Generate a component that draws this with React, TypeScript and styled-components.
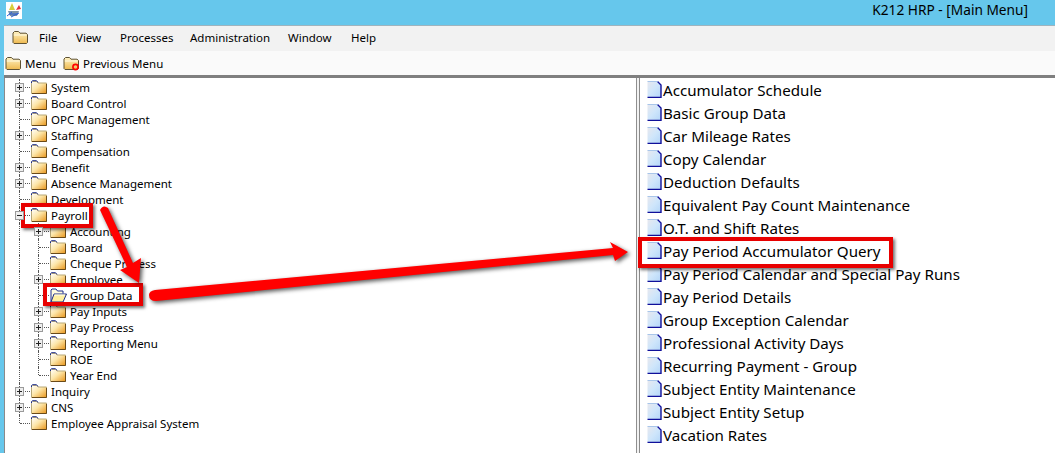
import styled, { createGlobalStyle } from "styled-components";

const GlobalStyle = createGlobalStyle`
  html, body {
    margin: 0;
    padding: 0;
    height: 100%;
    overflow: hidden;
    background: #66c7ec;
    font-family: "Noto Sans", "DejaVu Sans", sans-serif;
    color: #000;
  }
`;

interface TreeItem {
  label: string;
  level: 0 | 1;
  expander?: "plus" | "minus";
  open?: boolean;
  last?: boolean;
}

const treeItems: TreeItem[] = [
  { label: "System", level: 0, expander: "plus" },
  { label: "Board Control", level: 0, expander: "plus" },
  { label: "OPC Management", level: 0 },
  { label: "Staffing", level: 0, expander: "plus" },
  { label: "Compensation", level: 0 },
  { label: "Benefit", level: 0, expander: "plus" },
  { label: "Absence Management", level: 0, expander: "plus" },
  { label: "Development", level: 0 },
  { label: "Payroll", level: 0, expander: "minus" },
  { label: "Accounting", level: 1, expander: "plus" },
  { label: "Board", level: 1 },
  { label: "Cheque Process", level: 1 },
  { label: "Employee", level: 1, expander: "plus" },
  { label: "Group Data", level: 1, open: true },
  { label: "Pay Inputs", level: 1, expander: "plus" },
  { label: "Pay Process", level: 1, expander: "plus" },
  { label: "Reporting Menu", level: 1, expander: "plus" },
  { label: "ROE", level: 1 },
  { label: "Year End", level: 1, last: true },
  { label: "Inquiry", level: 0, expander: "plus" },
  { label: "CNS", level: 0, expander: "plus" },
  { label: "Employee Appraisal System", level: 0, last: true },
];

const listItems = [
  "Accumulator Schedule",
  "Basic Group Data",
  "Car Mileage Rates",
  "Copy Calendar",
  "Deduction Defaults",
  "Equivalent Pay Count Maintenance",
  "O.T. and Shift Rates",
  "Pay Period Accumulator Query",
  "Pay Period Calendar and Special Pay Runs",
  "Pay Period Details",
  "Group Exception Calendar",
  "Professional Activity Days",
  "Recurring Payment - Group",
  "Subject Entity Maintenance",
  "Subject Entity Setup",
  "Vacation Rates",
];

const menus = [
  { label: "File", width: 37 },
  { label: "View", width: 44 },
  { label: "Processes", width: 70 },
  { label: "Administration", width: 98 },
  { label: "Window", width: 63 },
  { label: "Help", width: 40 },
];

const TreeFolder = () => (
  <svg width="16" height="14" viewBox="0 0 16 14">
    <defs>
      <linearGradient id="treeFolderFill" x1="0" y1="0" x2="1" y2="1">
        <stop offset="0" stopColor="#ffffff" />
        <stop offset="0.45" stopColor="#fde6a8" />
        <stop offset="1" stopColor="#e8951a" />
      </linearGradient>
    </defs>
    <path d="M0.5 13.5V2.5L1.5 1.5H5.5L7 3H15.5V13.5Z" fill="url(#treeFolderFill)" stroke="#b8a878" />
    <path d="M0.5 3V1.5L1.5 0.7H5.5L7 2.4" fill="none" stroke="#1a2a8a" />
    <path d="M1 13.5H15.5V4" fill="none" stroke="#6a4a18" />
  </svg>
);

const OpenFolder = () => (
  <svg width="17" height="15" viewBox="0 0 17 15">
    <path d="M1 14V2L2 1H6L7.5 3H13V5.5" fill="#fffde0" stroke="#1a2a8a" />
    <path d="M1 14L4 6H16.5L13 14Z" fill="#fff0a0" stroke="#1a2a8a" />
    <path d="M4.5 7H15" stroke="#fffef0" />
  </svg>
);

const GoldFolder = ({ back }: { back?: boolean }) => (
  <svg width="17" height="15" viewBox="0 0 17 15">
    <defs>
      <linearGradient id="goldFolderFill" x1="0" y1="0" x2="0" y2="1">
        <stop offset="0" stopColor="#fff3c4" />
        <stop offset="1" stopColor="#eeb94f" />
      </linearGradient>
    </defs>
    <path
      d="M1 12.5V3L2.5 1.5H6.5L8 3.2H14L15.5 4.5V12.5L14.5 13.5H2Z"
      fill="url(#goldFolderFill)"
      stroke="#5f5233"
    />
    <path d="M1.8 5H14.8" stroke="#fffbe6" />
    {back && <circle cx="12.5" cy="11" r="2.6" fill="none" stroke="#f00" strokeWidth="1.6" />}
  </svg>
);

const DocIcon = () => (
  <svg width="15" height="17" viewBox="0 0 15 17">
    <defs>
      <linearGradient id="docFill" x1="0" y1="0" x2="1" y2="1">
        <stop offset="0" stopColor="#e8e8ee" />
        <stop offset="0.5" stopColor="#cfe6fb" />
        <stop offset="1" stopColor="#b4d6f8" />
      </linearGradient>
    </defs>
    <path d="M0.5 0.5H10.5L14 4V16H0.5Z" fill="url(#docFill)" />
    <path d="M10.5 0.5L14 4V16.5H0.5" fill="none" stroke="#10109a" strokeWidth="1.4" />
    <path d="M0.5 0.5H10.5" stroke="#a9c6ea" />
  </svg>
);

const AppLogo = () => (
  <svg width="16" height="17" viewBox="0 0 16 17">
    <rect width="16" height="17" fill="#fff" />
    <path d="M3 8L6 1L9 8Z" fill="#d8cf3a" />
    <path d="M10 8L13 3L15 7Z" fill="#e2343a" />
    <path d="M2 9H13L11 14H4Z" fill="#7d93a8" />
    <path d="M1 14L6 10M5 15L13 11M3 12H12" stroke="#2d5fd0" />
  </svg>
);

const App = () => {
  return (
    <>
      <GlobalStyle />
      <Screen>
        <TitleBar>
          <AppLogo />
          <Title>K212 HRP - [Main Menu]</Title>
        </TitleBar>
        <Client>
          <MenuBar>
            <MenuIcon>
              <GoldFolder />
            </MenuIcon>
            {menus.map((menu) => (
              <MenuItem key={menu.label} $width={menu.width}>
                {menu.label}
              </MenuItem>
            ))}
          </MenuBar>
          <ToolBar>
            <ToolButton $width={58}>
              <GoldFolder />
              Menu
            </ToolButton>
            <ToolButton $width={110}>
              <GoldFolder back />
              Previous Menu
            </ToolButton>
          </ToolBar>
          <Panes>
            <TreePane>
              {treeItems.map((item) => (
                <TreeRow key={item.label}>
                  <Stem $kind={item.level === 1 ? "pass" : item.last ? "last" : "branch"}>
                    {item.level === 0 && item.expander && <Expander $sign={item.expander} />}
                  </Stem>
                  {item.level === 1 && (
                    <Stem $kind={item.last ? "last" : "branch"}>
                      {item.expander && <Expander $sign={item.expander} />}
                    </Stem>
                  )}
                  <FolderSlot>{item.open ? <OpenFolder /> : <TreeFolder />}</FolderSlot>
                  <TreeLabel>{item.label}</TreeLabel>
                </TreeRow>
              ))}
            </TreePane>
            <Splitter />
            <ListPane>
              {listItems.map((item) => (
                <ListRow key={item}>
                  <DocIcon />
                  <ListLabel>{item}</ListLabel>
                </ListRow>
              ))}
            </ListPane>
          </Panes>
        </Client>

        <Callout $left={21} $top={203} $width={72} $height={25} />
        <Callout $left={43} $top={283} $width={100} $height={23} />
        <Callout $left={638} $top={237} $width={255} $height={31} />
        <Arrows width="1055" height="453" viewBox="0 0 1055 453">
          <path
            d="M100 210Q103 204 108 208L133 263L141 258L139 283L120 270L127 267Z"
            fill="#f00"
          />
          <path
            d="M155 290L613 248L610 242L628 252L615 261L613 255L156 301Q149 301 149 295Q149 291 155 290Z"
            fill="#f00"
          />
        </Arrows>
      </Screen>
    </>
  );
};

export default App;

const Screen = styled.div`
  position: relative;
  width: 1055px;
  height: 453px;
  overflow: hidden;
  background: #66c7ec;
  display: flex;
  flex-direction: column;
`;

const TitleBar = styled.div`
  height: 25px;
  flex-shrink: 0;
  display: flex;
  align-items: center;
  justify-content: space-between;
  padding: 0 27px 4px 6px;
  box-sizing: border-box;
`;

const Title = styled.span`
  font-size: 13.7px;
  line-height: 15px;
  margin-top: -2px;
  color: #000;
`;

const Client = styled.div`
  flex: 1;
  min-height: 0;
  margin-left: 4px;
  display: flex;
  flex-direction: column;
  border-top: 1px solid #9fb4be;
  background: #fff;
`;

const MenuBar = styled.div`
  height: 25px;
  flex-shrink: 0;
  display: flex;
  align-items: center;
  padding: 0 0 2px 8px;
  background: #f2f2f2;
  box-sizing: border-box;
`;

const MenuIcon = styled.div`
  width: 27px;
  display: flex;
  align-items: center;
`;

const MenuItem = styled.span<{ $width: number }>`
  width: ${(props) => props.$width}px;
  font-size: 11.5px;
  color: #000;
`;

const ToolBar = styled.div`
  height: 27px;
  flex-shrink: 0;
  display: flex;
  align-items: center;
  padding-left: 1px;
  background: #fafafa;
  border-bottom: 3px solid #7f7f7f;
  box-sizing: border-box;
`;

const ToolButton = styled.div<{ $width: number }>`
  width: ${(props) => props.$width}px;
  display: flex;
  align-items: center;
  gap: 3px;
  font-size: 11.5px;
  white-space: nowrap;
  color: #000;
`;

const Panes = styled.div`
  flex: 1;
  min-height: 0;
  display: flex;
`;

const TreePane = styled.div`
  width: 632px;
  flex-shrink: 0;
  box-sizing: border-box;
  padding: 1px 0 0 6px;
  border-left: 1px solid #8a8a8a;
  background: #fff;
`;

const TreeRow = styled.div`
  height: 16px;
  display: flex;
  align-items: center;
`;

const Stem = styled.div<{ $kind: "pass" | "branch" | "last" }>`
  position: relative;
  width: 19px;
  height: 16px;
  flex-shrink: 0;

  &::before {
    content: "";
    position: absolute;
    left: 8px;
    top: 0;
    height: ${(props) => (props.$kind === "last" ? "8px" : "16px")};
    border-left: 1px dotted #555;
  }

  &::after {
    content: "";
    position: absolute;
    left: 9px;
    top: 8px;
    width: 10px;
    border-top: 1px dotted #555;
    display: ${(props) => (props.$kind === "pass" ? "none" : "block")};
  }
`;

const Expander = styled.span<{ $sign: "plus" | "minus" }>`
  position: absolute;
  z-index: 1;
  left: 4px;
  top: 4px;
  width: 7px;
  height: 7px;
  border: 1px solid #9a9a9a;
  background:
    linear-gradient(#222, #222) center / 5px 1px no-repeat,
    ${(props) =>
      props.$sign === "plus" ? "linear-gradient(#222, #222) center / 1px 5px no-repeat," : ""}
    #eeeeee;
`;

const FolderSlot = styled.div`
  width: 20px;
  display: flex;
  align-items: center;
  flex-shrink: 0;
  margin-left: 1px;
`;

const TreeLabel = styled.span`
  font-size: 11.5px;
  white-space: nowrap;
  color: #000;
`;

const Splitter = styled.div`
  width: 3px;
  flex-shrink: 0;
  background: #f2f2f2;
  border-left: 1px solid #8f8f8f;
  box-sizing: border-box;
`;

const ListPane = styled.div`
  flex: 1;
  padding: 0 0 0 7px;
  border-left: 1px solid #8a8a8a;
  background: #fff;
`;

const ListRow = styled.div`
  height: 23px;
  display: flex;
  align-items: center;
  gap: 1px;
`;

const ListLabel = styled.span`
  font-size: 15.15px;
  white-space: nowrap;
  color: #000;
`;

const Callout = styled.div<{ $left: number; $top: number; $width: number; $height: number }>`
  position: absolute;
  left: ${(props) => props.$left}px;
  top: ${(props) => props.$top}px;
  width: ${(props) => props.$width}px;
  height: ${(props) => props.$height}px;
  box-sizing: border-box;
  border: 4px solid #e80000;
  box-shadow: 2px 2px 3px rgba(0, 0, 0, 0.55);
`;

const Arrows = styled.svg`
  position: absolute;
  left: 0;
  top: 0;
  filter: drop-shadow(2px 2px 2px rgba(0, 0, 0, 0.65));
`;
